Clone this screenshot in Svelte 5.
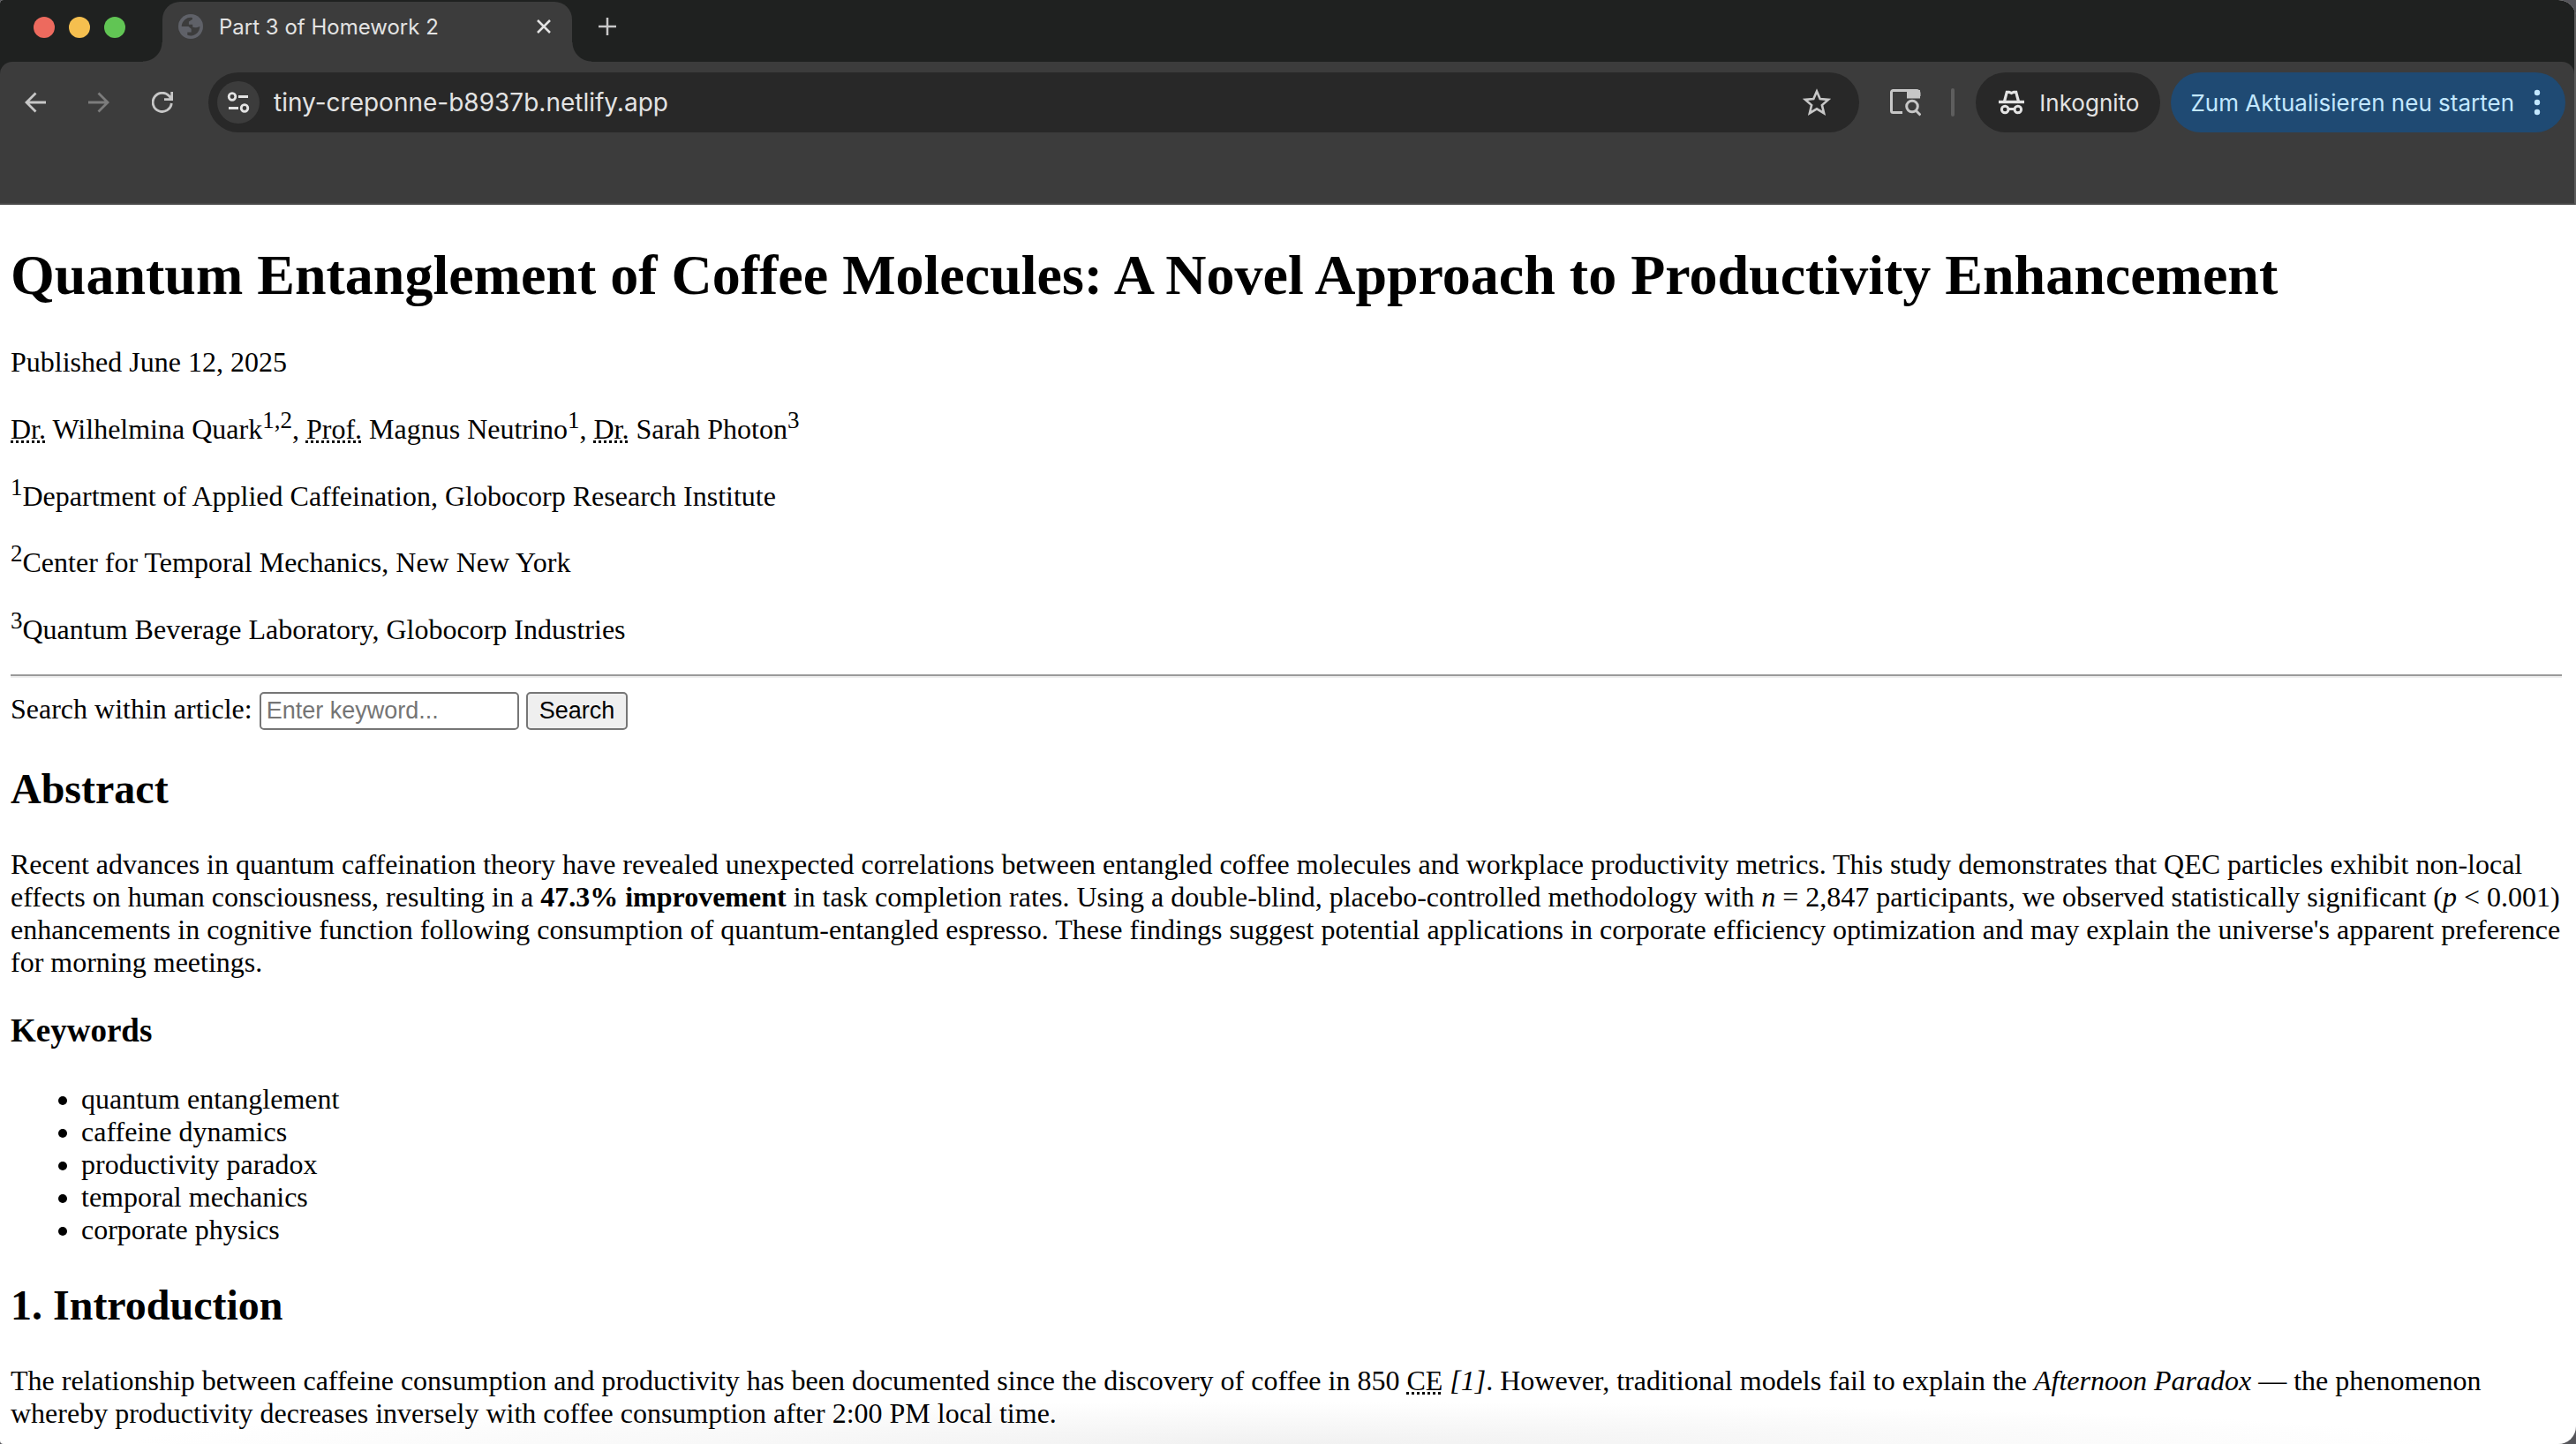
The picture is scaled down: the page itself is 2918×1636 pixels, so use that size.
<script lang="ts">
  const affiliations = [
    'Department of Applied Caffeination, Globocorp Research Institute',
    'Center for Temporal Mechanics, New New York',
    'Quantum Beverage Laboratory, Globocorp Industries'
  ];
  const keywords = [
    'quantum entanglement',
    'caffeine dynamics',
    'productivity paradox',
    'temporal mechanics',
    'corporate physics'
  ];
  let keyword = $state('');
  let address = $state('tiny-creponne-b8937b.netlify.app');
</script>

<div class="window">
  <header class="chrome">
    <div class="tabstrip">
      <div class="lights">
        <button class="light red" aria-label="Close window"></button>
        <button class="light yellow" aria-label="Minimize window"></button>
        <button class="light green" aria-label="Zoom window"></button>
      </div>
      <div class="tab">
        <svg class="globe" viewBox="0 0 28 28" width="28" height="28" aria-hidden="true">
          <circle cx="14" cy="14" r="14" fill="#5f6168" />
          <path d="M3.700 14A10.400 10.400 0 0 1 15.900 3.900V6l-4 2.500v3.200h4.300v2.800c1.500 1.300 5 .8 8.200-.5A10.400 10.400 0 0 1 10.300 23.800v-3.300h4.400v-3.700L11.500 14z" fill="#3c3c3c" />
        </svg>
        <span class="tab-title">Part 3 of Homework 2</span>
        <button class="icon-button close" aria-label="Close tab">
          <svg viewBox="0 0 16 16" width="16" height="16"><path d="M1 1l14 14M15 1L1 15" stroke="#e3e3e3" stroke-width="2.500" fill="none" /></svg>
        </button>
      </div>
      <button class="icon-button new-tab" aria-label="New tab">
        <svg viewBox="0 0 20 20" width="20" height="20"><path d="M10 0v20M0 10h20" stroke="#c7c7c7" stroke-width="2.500" fill="none" /></svg>
      </button>
    </div>

    <nav class="toolbar">
      <button class="icon-button nav" aria-label="Back">
        <svg viewBox="0 0 24 24" width="24" height="24"><path d="M24 12H2M12.500 1.500L2 12l10.500 10.500" stroke="#c7c7c7" stroke-width="2.800" fill="none" /></svg>
      </button>
      <button class="icon-button nav" aria-label="Forward" disabled>
        <svg viewBox="0 0 24 24" width="24" height="24"><path d="M0 12h22M11.500 1.500L22 12 11.500 22.500" stroke="#7c7c7c" stroke-width="2.800" fill="none" /></svg>
      </button>
      <button class="icon-button nav" aria-label="Reload">
        <svg viewBox="0 0 24 24" width="24" height="24"><path d="M22.300 13A10.600 10.600 0 1 1 20 5.200L22 8M22.700 0v8.700H14" stroke="#c7c7c7" stroke-width="2.800" fill="none" /></svg>
      </button>
      <div class="omnibox">
        <button class="icon-button site-info" aria-label="Site information">
          <svg viewBox="0 0 26 24" width="26" height="24" fill="none" stroke="#e3e3e3" stroke-width="2.800"><circle cx="6" cy="5.500" r="3.800" /><path d="M13 5.500h11M2 18.500h11" /><circle cx="20" cy="18.500" r="3.800" /></svg>
        </button>
        <input class="address" aria-label="Address" bind:value={address} />
        <button class="icon-button star" aria-label="Bookmark">
          <svg viewBox="0 0 32 32" width="32" height="32"><path d="M16 3.500l3.700 8.600 9.300.8-7.100 6.200 2.200 9.100-8.100-4.900-8.100 4.900 2.200-9.100L3 12.900l9.300-.8z" stroke="#c7c7c7" stroke-width="2.600" fill="none" /></svg>
        </button>
      </div>
      <button class="icon-button panel" aria-label="Search side panel">
        <svg viewBox="0 0 36 32" width="36" height="32"><path d="M15 27.500H4.500a2 2 0 0 1-2-2v-21a2 2 0 0 1 2-2H31a3 3 0 0 1 3 3V9" stroke="#c7c7c7" stroke-width="3" fill="none" /><path d="M20 2h15v9.500H20z" fill="#c7c7c7" /><circle cx="26" cy="20.500" r="6.300" stroke="#c7c7c7" stroke-width="3" fill="none" /><path d="M30 25l5.500 5.500" stroke="#c7c7c7" stroke-width="3" /></svg>
      </button>
      <span class="divider"></span>
      <button class="pill incognito">
        <svg viewBox="0 0 30 30" width="30" height="30" fill="none" stroke="#e3e3e3" stroke-width="3"><path d="M0 14.500h29" stroke-width="3.400" /><path d="M6.500 14L9.300 3.300h2.500L14.500 4.500l2.700-1.200h2.500L22.500 14" stroke-width="3.200" /><circle cx="7.200" cy="23" r="3.800" /><circle cx="21.800" cy="23" r="3.800" /><path d="M11 22.500h7" /></svg>
        <span>Inkognito</span>
      </button>
      <button class="pill update">
        <span>Zum Aktualisieren neu starten</span>
        <svg viewBox="0 0 8 30" width="8" height="30" fill="#c2e7ff"><circle cx="4" cy="4" r="3.200" /><circle cx="4" cy="15" r="3.200" /><circle cx="4" cy="26" r="3.200" /></svg>
      </button>
    </nav>
  </header>

  <main class="page">
    <h1>Quantum Entanglement of Coffee Molecules: A Novel Approach to Productivity Enhancement</h1>
    <p>Published June 12, 2025</p>
    <p><abbr title="Doctor">Dr.</abbr> Wilhelmina Quark<sup>1,2</sup>, <abbr title="Professor">Prof.</abbr> Magnus Neutrino<sup>1</sup>, <abbr title="Doctor">Dr.</abbr> Sarah Photon<sup>3</sup></p>
    {#each affiliations as name, i}
      <p><sup>{i + 1}</sup>{name}</p>
    {/each}
    <hr />
    <form class="search" onsubmit={(e) => e.preventDefault()}>
      <label for="keyword">Search within article:</label>
      <input id="keyword" type="text" placeholder="Enter keyword..." bind:value={keyword} />
      <button type="submit">Search</button>
    </form>

    <h2>Abstract</h2>
    <p>Recent advances in quantum caffeination theory have revealed unexpected correlations between entangled coffee molecules and workplace productivity metrics. This study demonstrates that QEC particles exhibit non-local effects on human consciousness, resulting in a <strong>47.3% improvement</strong> in task completion rates. Using a double-blind, placebo-controlled methodology with <em>n</em> = 2,847 participants, we observed statistically significant (<em>p</em> &lt; 0.001) enhancements in cognitive function following consumption of quantum-entangled espresso. These findings suggest potential applications in corporate efficiency optimization and may explain the universe's apparent preference for morning meetings.</p>

    <h3>Keywords</h3>
    <ul>
      {#each keywords as item}
        <li>{item}</li>
      {/each}
    </ul>

    <h2>1. Introduction</h2>
    <p>The relationship between caffeine consumption and productivity has been documented since the discovery of coffee in 850 <abbr title="Common Era">CE</abbr> <cite>[1]</cite>. However, traditional models fail to explain the <em>Afternoon Paradox</em> — the phenomenon whereby productivity decreases inversely with coffee consumption after 2:00 PM local time.</p>
  </main>
</div>

<style>
  :global(body) {
    margin: 0;
    background: #55555a;
  }
  .window {
    height: 100vh;
    overflow: hidden;
    box-sizing: border-box;
    border-radius: 4px 20px 20px 4px;
    background: radial-gradient(ellipse 45% 48px at 50% 100%, #f1f1f1, #fff) #fff;
    color: #000;
  }
  .chrome {
    box-sizing: border-box;
    height: 232px;
    border-right: 2px solid #5c5c5c;
    border-bottom: 2px solid #474747;
    background: #1f2120;
    font-family: Inter, 'Liberation Sans', sans-serif;
    font-size: 26px;
  }
  button {
    font: inherit;
  }
  .tabstrip {
    display: flex;
    height: 70px;
  }
  .lights {
    display: flex;
    gap: 16px;
    padding: 19px 42px 0 38px;
  }
  .light {
    width: 24px;
    height: 24px;
    padding: 0;
    border: 0;
    border-radius: 50%;
  }
  .red { background: #ed6a5e; }
  .yellow { background: #f5bf4f; }
  .green { background: #61c554; }
  .tab {
    position: relative;
    display: flex;
    align-items: center;
    box-sizing: border-box;
    width: 464px;
    margin-top: 2px;
    padding: 0 18px 12px;
    border-radius: 20px 20px 0 0;
    background: #3c3c3c;
    color: #e3e3e3;
    font-size: 24px;
  }
  .tab::before,
  .tab::after {
    content: '';
    position: absolute;
    bottom: 0;
    width: 22px;
    height: 22px;
  }
  .tab::before {
    right: 100%;
    background: radial-gradient(circle at 0 0, #1f2120 21px, #3c3c3c 22px);
  }
  .tab::after {
    left: 100%;
    background: radial-gradient(circle at 100% 0, #1f2120 21px, #3c3c3c 22px);
  }
  .tab-title {
    flex: 1;
    margin-left: 18px;
  }
  .icon-button {
    display: flex;
    align-items: center;
    justify-content: center;
    flex: none;
    padding: 0;
    border: 0;
    background: none;
  }
  .close {
    width: 28px;
    height: 28px;
  }
  .new-tab {
    width: 40px;
    height: 60px;
    margin-left: 20px;
  }
  .toolbar {
    display: flex;
    align-items: flex-start;
    box-sizing: border-box;
    height: 160px;
    padding: 12px 10px 0 4px;
    border-radius: 14px 14px 0 0;
    background: #3c3c3c;
  }
  .nav {
    width: 72px;
    height: 68px;
  }
  .omnibox {
    display: flex;
    flex: 1;
    align-items: center;
    height: 68px;
    margin-left: 16px;
    padding: 0 32px 0 10px;
    border-radius: 34px;
    background: #282828;
    box-sizing: border-box;
  }
  .site-info {
    width: 48px;
    height: 48px;
    border-radius: 50%;
    background: #3c3c3c;
  }
  .address {
    flex: 1;
    margin-left: 16px;
    padding: 0;
    border: 0;
    outline: 0;
    background: none;
    color: #e3e3e3;
    font: inherit;
    font-size: 28px;
  }
  .panel {
    width: 36px;
    height: 68px;
    margin-left: 34px;
  }
  .divider {
    width: 4px;
    height: 32px;
    margin: 18px 24px 0 34px;
    border-radius: 2px;
    background: #5e5e5e;
  }
  .pill {
    display: flex;
    align-items: center;
    height: 68px;
    border: 0;
    border-radius: 34px;
    white-space: nowrap;
  }
  .incognito {
    gap: 16px;
    padding: 0 24px 0 26px;
    background: #282828;
    color: #e3e3e3;
  }
  .update {
    gap: 22px;
    margin-left: 12px;
    padding: 0 28px 0 22px;
    background: #1f4a73;
    color: #c2e7ff;
  }
  .page {
    padding: 1px 16px 0 12px;
    font-family: 'Liberation Serif', serif;
    font-size: 32px;
    line-height: 37px;
  }
  h1, h2, h3, p, ul {
    margin: 0;
  }
  h1 {
    margin: 42px 0 43px;
    font-size: 64px;
    line-height: 74px;
  }
  p {
    margin: 32px 0;
  }
  h2 {
    margin: 39px 0 40px;
    font-size: 48px;
    line-height: 55px;
  }
  h3 {
    margin: 37px 0 38px;
    font-size: 37px;
    line-height: 43px;
  }
  ul {
    margin: 32px 0;
    padding-left: 80px;
  }
  sup {
    font-size: 27px;
    line-height: normal;
  }
  abbr {
    text-decoration: underline dotted;
  }
  hr {
    height: 0;
    margin: 16px 0;
    border: 0 solid;
    border-width: 2px 0;
    border-color: #9a9a9a #0000 #eee;
  }
  .search {
    display: flex;
    align-items: flex-start;
    gap: 8px;
  }
  .search label {
    padding-top: 1px;
  }
  .search input,
  .search button {
    box-sizing: border-box;
    height: 43px;
    border: 2px solid #767676;
    border-radius: 5px;
    font-family: 'Liberation Sans', sans-serif;
    font-size: 27px;
    line-height: 31px;
    color: #000;
  }
  .search input {
    width: 294px;
    padding: 2px 6px;
    background: #fff;
  }
  .search input::placeholder {
    color: #757575;
  }
  .search button {
    padding: 2px 13px;
    background: #efefef;
  }
</style>
